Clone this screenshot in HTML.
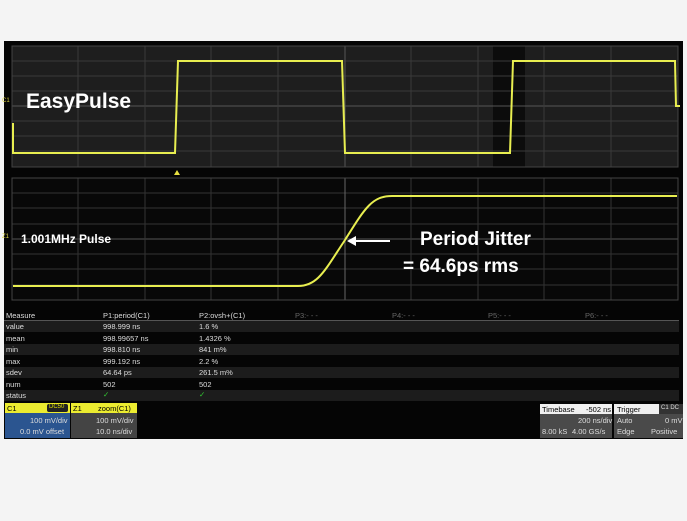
<!DOCTYPE html>
<html><head><style>
body{margin:0;width:687px;height:521px;background:#f4f4f4;position:relative;overflow:hidden;font-family:"Liberation Sans",sans-serif}
.scr{position:absolute;left:4px;top:41px;width:679px;height:398px;background:#050505}
.t{position:absolute;font-size:7.5px;color:#ddd;white-space:nowrap}
.row{position:absolute;left:4px;width:675px;height:11px}
</style></head><body>
<div class="scr"></div>
<svg style="position:absolute;left:0;top:0" width="687" height="521">
<rect x="12" y="46" width="666" height="121" fill="#1e1e1e"/>
<rect x="493" y="46" width="32" height="121" fill="#0c0c0c"/>
<g stroke="#3a3a3a" stroke-width="1">
<line x1="12" y1="61" x2="678" y2="61"/><line x1="12" y1="76" x2="678" y2="76"/><line x1="12" y1="91" x2="678" y2="91"/><line x1="12" y1="106" x2="678" y2="106" stroke="#555"/><line x1="12" y1="121" x2="678" y2="121"/><line x1="12" y1="136" x2="678" y2="136"/><line x1="12" y1="151" x2="678" y2="151"/>
<line x1="78" y1="46" x2="78" y2="167"/><line x1="145" y1="46" x2="145" y2="167"/><line x1="211" y1="46" x2="211" y2="167"/><line x1="278" y1="46" x2="278" y2="167"/><line x1="345" y1="46" x2="345" y2="167" stroke="#555"/><line x1="411" y1="46" x2="411" y2="167"/><line x1="478" y1="46" x2="478" y2="167"/><line x1="544" y1="46" x2="544" y2="167"/><line x1="611" y1="46" x2="611" y2="167"/>
</g>
<rect x="12" y="46" width="666" height="121" fill="none" stroke="#444"/>
<polyline points="13,123 13,153 175,153 178,61 342,61 345,153 510,153 513,61 675,61 676,106 680,106" fill="none" stroke="#e8ee50" stroke-width="2"/>
<polygon points="177,170 174,175 180,175" fill="#e8e040"/>
<rect x="12" y="178" width="666" height="122" fill="#080808"/>
<g stroke="#333" stroke-width="1">
<line x1="12" y1="193" x2="678" y2="193"/><line x1="12" y1="208" x2="678" y2="208"/><line x1="12" y1="224" x2="678" y2="224"/><line x1="12" y1="239" x2="678" y2="239" stroke="#555"/><line x1="12" y1="254" x2="678" y2="254"/><line x1="12" y1="269" x2="678" y2="269"/><line x1="12" y1="285" x2="678" y2="285"/>
<line x1="78" y1="178" x2="78" y2="300"/><line x1="145" y1="178" x2="145" y2="300"/><line x1="211" y1="178" x2="211" y2="300"/><line x1="278" y1="178" x2="278" y2="300"/><line x1="345" y1="178" x2="345" y2="300" stroke="#666"/><line x1="411" y1="178" x2="411" y2="300"/><line x1="478" y1="178" x2="478" y2="300"/><line x1="544" y1="178" x2="544" y2="300"/><line x1="611" y1="178" x2="611" y2="300"/>
</g>
<rect x="12" y="178" width="666" height="122" fill="none" stroke="#444"/>
<path d="M13,286 L298,286 C318,286 325,270 345,240 C365,208 372,196 392,196 L677,196" fill="none" stroke="#e8ee50" stroke-width="2"/>
<line x1="352" y1="241" x2="390" y2="241" stroke="#fff" stroke-width="2"/>
<polygon points="347,241 356,236 356,246" fill="#fff"/>
<text x="26" y="108" font-family="Liberation Sans" font-weight="bold" font-size="21" fill="#fff">EasyPulse</text>
<text x="21" y="243" font-family="Liberation Sans" font-weight="bold" font-size="12" fill="#fff">1.001MHz Pulse</text>
<text x="420" y="245" font-family="Liberation Sans" font-weight="bold" font-size="19" fill="#fff">Period Jitter</text>
<text x="403" y="272" font-family="Liberation Sans" font-weight="bold" font-size="19" fill="#fff">= 64.6ps rms</text>
<text x="2" y="102" font-size="6" fill="#d8d040">C1</text>
<text x="2" y="238" font-size="6" fill="#d8d040">Z1</text>
</svg>
<div class="row" style="top:321px;background:#1c1c1c"></div>
<div class="row" style="top:344px;background:#1c1c1c"></div>
<div class="row" style="top:367px;background:#1c1c1c"></div>
<div class="row" style="top:390px;background:#1c1c1c"></div>
<div style="position:absolute;left:4px;top:320px;width:675px;height:1px;background:#555"></div>
<div class="t" style="left:6px;top:311px">Measure</div><div class="t" style="left:103px;top:311px">P1:period(C1)</div><div class="t" style="left:199px;top:311px">P2:ovsh+(C1)</div><div class="t" style="left:295px;top:311px;color:#666">P3:- - -</div><div class="t" style="left:392px;top:311px;color:#666">P4:- - -</div><div class="t" style="left:488px;top:311px;color:#666">P5:- - -</div><div class="t" style="left:585px;top:311px;color:#666">P6:- - -</div>
<div class="t" style="left:6px;top:322px">value</div><div class="t" style="left:103px;top:322px">998.999 ns</div><div class="t" style="left:199px;top:322px">1.6 %</div>
<div class="t" style="left:6px;top:334px">mean</div><div class="t" style="left:103px;top:334px">998.99657 ns</div><div class="t" style="left:199px;top:334px">1.4326 %</div>
<div class="t" style="left:6px;top:345px">min</div><div class="t" style="left:103px;top:345px">998.810 ns</div><div class="t" style="left:199px;top:345px">841 m%</div>
<div class="t" style="left:6px;top:357px">max</div><div class="t" style="left:103px;top:357px">999.192 ns</div><div class="t" style="left:199px;top:357px">2.2 %</div>
<div class="t" style="left:6px;top:368px">sdev</div><div class="t" style="left:103px;top:368px">64.64 ps</div><div class="t" style="left:199px;top:368px">261.5 m%</div>
<div class="t" style="left:6px;top:380px">num</div><div class="t" style="left:103px;top:380px">502</div><div class="t" style="left:199px;top:380px">502</div>
<div class="t" style="left:6px;top:391px">status</div><div class="t" style="left:103px;top:390px;color:#3c3">✓</div><div class="t" style="left:199px;top:390px;color:#3c3">✓</div>
<div style="position:absolute;left:5px;top:403px;width:65px;height:10px;background:#ecec30"></div>
<div class="t" style="left:7px;top:404px;color:#000">C1</div>
<div style="position:absolute;left:47px;top:404px;width:21px;height:8px;background:#222;border-radius:2px"></div><div class="t" style="left:49px;top:404px;font-size:6px;color:#dd0">DC50</div>
<div style="position:absolute;left:5px;top:413px;width:65px;height:25px;background:#2b5590"></div>
<div class="t" style="left:30px;top:416px">100 mV/div</div><div class="t" style="left:20px;top:427px">0.0 mV offset</div>
<div style="position:absolute;left:71px;top:403px;width:66px;height:10px;background:#ecec30"></div>
<div class="t" style="left:73px;top:404px;color:#000">Z1</div><div class="t" style="left:98px;top:404px;color:#000">zoom(C1)</div>
<div style="position:absolute;left:71px;top:413px;width:66px;height:25px;background:#444"></div>
<div class="t" style="left:96px;top:416px">100 mV/div</div><div class="t" style="left:96px;top:427px">10.0 ns/div</div>
<div style="position:absolute;left:540px;top:404px;width:72px;height:10px;background:#f0f0f0"></div>
<div class="t" style="left:542px;top:405px;color:#000">Timebase</div><div class="t" style="left:586px;top:405px;color:#000">-502 ns</div>
<div style="position:absolute;left:540px;top:414px;width:72px;height:24px;background:#4a4a4a"></div>
<div class="t" style="left:578px;top:416px">200 ns/div</div><div class="t" style="left:542px;top:427px">8.00 kS</div><div class="t" style="left:572px;top:427px">4.00 GS/s</div>
<div style="position:absolute;left:614px;top:404px;width:69px;height:10px;background:#f0f0f0"></div>
<div class="t" style="left:617px;top:405px;color:#000">Trigger</div>
<div style="position:absolute;left:659px;top:404px;width:24px;height:10px;background:#333"></div><div class="t" style="left:661px;top:405px;font-size:6px">C1 DC</div>
<div style="position:absolute;left:614px;top:414px;width:69px;height:24px;background:#4a4a4a"></div>
<div class="t" style="left:617px;top:416px">Auto</div><div class="t" style="left:665px;top:416px">0 mV</div><div class="t" style="left:617px;top:427px">Edge</div><div class="t" style="left:651px;top:427px">Positive</div>
</body></html>
